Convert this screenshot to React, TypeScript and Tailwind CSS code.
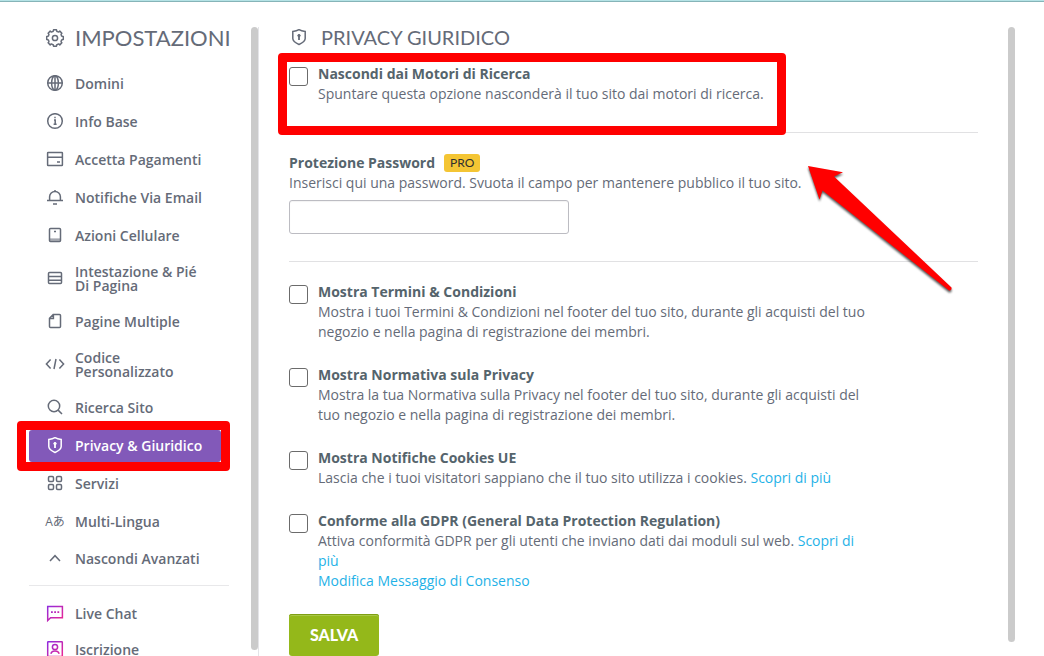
import React from 'react';
import clsx from 'clsx';

type IconName =
  | 'globe'
  | 'info'
  | 'card'
  | 'bell'
  | 'phone'
  | 'rows'
  | 'page'
  | 'code'
  | 'search'
  | 'shield'
  | 'grid'
  | 'up'
  | 'chat'
  | 'user';

// eight rounded teeth around the centre of a 20x20 box
const gearPath = (): string => {
  const at = (deg: number, r: number) => {
    const a = (deg * Math.PI) / 180;
    return `${(10 + r * Math.sin(a)).toFixed(2)} ${(10 - r * Math.cos(a)).toFixed(2)}`;
  };
  let d = `M${at(-10, 8.4)}`;
  for (let k = 0; k < 8; k++) {
    const t = k * 45;
    d += `L${at(t + 10, 8.4)}Q${at(t + 14, 6.4)} ${at(t + 22.5, 7)}Q${at(t + 31, 6.4)} ${at(t + 35, 8.4)}`;
  }
  return d + 'Z';
};

const shapes: Record<IconName, React.ReactNode> = {
  globe: (
    <>
      <circle cx="10" cy="10" r="7.3" />
      <ellipse cx="10" cy="10" rx="3.4" ry="7.3" />
      <path d="M10 2.7v14.6M2.7 10h14.6" />
    </>
  ),
  info: (
    <>
      <circle cx="10" cy="10" r="7.3" />
      <path d="M9 9h1.2v4.2M8.6 13.3h3M9.3 6.6h1.4" />
    </>
  ),
  card: (
    <>
      <rect x="2.6" y="3.5" width="14.8" height="13" rx="0.6" />
      <path d="M2.6 8.2h14.8M12 13h3" />
    </>
  ),
  bell: <path d="M2 13.5h16M4.6 13.5V9.8a5.4 5.4 0 0 1 10.8 0v3.7M10 4.4V3M8 17h4" />,
  phone: (
    <>
      <rect x="4.5" y="3.5" width="11" height="13" rx="1" />
      <path d="M9 6.5h2" />
      <path d="M5 14.6h10" strokeWidth="2.4" opacity="0.6" />
    </>
  ),
  rows: (
    <>
      <rect x="3.5" y="4.5" width="13" height="11" rx="1" />
      <path d="M3.5 8.5h13M3.5 12.2h13" />
    </>
  ),
  page: <path d="M8.2 3.5h6.3a1 1 0 0 1 1 1v11a1 1 0 0 1-1 1h-9a1 1 0 0 1-1-1V7.2zM8.4 3.7v3.7H4.7" />,
  code: <path d="M5.6 5.4 1.4 10l4.2 4.6M14.4 5.4l4.2 4.6-4.2 4.6M11 5l-2 10" />,
  search: (
    <>
      <circle cx="9" cy="9" r="5.7" />
      <path d="m13.1 13.1 3.9 3.9" />
    </>
  ),
  shield: (
    <>
      <path d="M10 2.7c2 1.3 4 1.6 6.2 1.7v7.2c0 3-3.4 4.7-6.2 5.9-2.8-1.2-6.200-2.900-6.200-5.900V4.400C6 4.300 8 4 10 2.700z" />
      <circle cx="10" cy="8.6" r="1.2" fill="currentColor" strokeWidth="1" />
      <path d="M10 9v4" strokeWidth="1.8" />
    </>
  ),
  grid: (
    <>
      <rect x="3.5" y="3.5" width="5" height="5" rx="1.2" />
      <rect x="11.5" y="3.5" width="5" height="5" rx="1.2" />
      <rect x="3.5" y="11.5" width="5" height="5" rx="1.2" />
      <rect x="11.5" y="11.5" width="5" height="5" rx="1.2" />
    </>
  ),
  up: <path d="m5 13 5-5.3 5 5.3" />,
  chat: (
    <>
      <path d="M2.7 17.5v-14h14.7v11.2H5.6z" />
      <path d="M6 9.2h1.8M9.2 9.2H11M12.4 9.2h1.8" strokeWidth="1.8" />
    </>
  ),
  user: (
    <>
      <rect x="2.7" y="2.8" width="14.6" height="14.6" rx="0.5" />
      <circle cx="10" cy="8" r="2.6" />
      <path d="M5.8 14.8c.6-2.2 2.2-2.9 4.2-2.9s3.6.7 4.2 2.9" />
    </>
  ),
};

const Icon: React.FC<{ name: IconName; gradient?: boolean }> = ({ name, gradient }) => (
  <svg
    viewBox="0 2 20 18"
    fill="none"
    stroke={gradient ? 'url(#pink)' : 'currentColor'}
    strokeWidth="1.5"
    className="h-[18px] w-5 shrink-0"
    aria-hidden="true"
  >
    {gradient && (
      <defs>
        <linearGradient id="pink" gradientUnits="userSpaceOnUse" x1="2" y1="2" x2="18" y2="18">
          <stop offset="0" stopColor="#8a2be2" />
          <stop offset="1" stopColor="#f0268f" />
        </linearGradient>
      </defs>
    )}
    {shapes[name]}
  </svg>
);

const mainItems: { label: string; icon: IconName; active?: boolean }[] = [
  { label: 'Domini', icon: 'globe' },
  { label: 'Info Base', icon: 'info' },
  { label: 'Accetta Pagamenti', icon: 'card' },
  { label: 'Notifiche Via Email', icon: 'bell' },
  { label: 'Azioni Cellulare', icon: 'phone' },
  { label: 'Intestazione & Pié Di Pagina', icon: 'rows' },
  { label: 'Pagine Multiple', icon: 'page' },
  { label: 'Codice Personalizzato', icon: 'code' },
  { label: 'Ricerca Sito', icon: 'search' },
  { label: 'Privacy & Giuridico', icon: 'shield', active: true },
  { label: 'Servizi', icon: 'grid' },
];

const itemClass = 'flex items-center gap-[10px] rounded-[3px] py-[7px] pr-4 pl-4';
const lowItemClass = 'flex h-[31px] w-full items-center gap-[10px] pr-4 pl-4 text-left';

const Sidebar: React.FC = () => (
  <aside className="flex shrink-0 border-r border-[#e4e4e8] pl-[29px]">
    <nav className="w-[200px]">
      <h1 className="flex h-[21px] items-center gap-[10px] pl-4 font-['Lato',sans-serif] text-[22px] leading-[21px]">
        <svg viewBox="0 0 20 20" fill="none" stroke="currentColor" strokeWidth="1.5" className="h-5 w-5 shrink-0" aria-hidden="true">
          <path d={gearPath()} strokeLinejoin="round" />
          <circle cx="10" cy="10" r="2.6" />
        </svg>
        IMPOSTAZIONI
      </h1>

      <ul className="mt-5 flex flex-col gap-[6px] text-sm leading-[14px] font-semibold">
        {mainItems.map((item) => (
          <li key={item.label} className="relative pr-2">
            <a
              href="#"
              aria-current={item.active ? 'page' : undefined}
              className={clsx(itemClass, item.active && 'bg-[#8259b9] text-white')}
            >
              <Icon name={item.icon} />
              {item.label}
            </a>
            {item.active && (
              <div className="pointer-events-none absolute -top-[9px] -right-px -bottom-[9px] -left-3 rounded-[4px] border-[9px] border-[#ff0000]" />
            )}
          </li>
        ))}
        <li>
          <a href="#" className={lowItemClass}>
            <span className="w-5 shrink-0 text-center font-['Open_Sans','Noto_Sans_CJK_JP',sans-serif] text-xs leading-[14px] font-normal whitespace-nowrap">
              Aあ
            </span>
            Multi-Lingua
          </a>
        </li>
        <li>
          <button type="button" className={lowItemClass}>
            <Icon name="up" />
            Nascondi Avanzati
          </button>
        </li>
      </ul>

      <hr className="mt-[11px] border-[#e8e8ea]" />

      <ul className="mt-3 flex flex-col gap-1 text-sm leading-[14px] font-semibold">
        <li>
          <a href="#" className={itemClass}>
            <Icon name="chat" gradient />
            Live Chat
          </a>
        </li>
        <li>
          <a href="#" className={itemClass}>
            <Icon name="user" gradient />
            Iscrizione
          </a>
        </li>
      </ul>
    </nav>
    <div className="mb-[6px] ml-[22px] w-[7px] rounded-full bg-[#cbcbcb]" />
  </aside>
);

const Option: React.FC<{ id: string; title: string; children: React.ReactNode }> = ({ id, title, children }) => (
  <div className="flex items-start gap-[10px]">
    <input
      type="checkbox"
      id={id}
      className="mt-[3px] h-[19px] w-[19px] shrink-0 appearance-none rounded-[3px] border border-[#6b6b6b] bg-white checked:bg-[#8259b9]"
    />
    <div className="max-w-[555px]">
      <label htmlFor={id} className="block font-bold text-[#55646c]">
        {title}
      </label>
      {children}
    </div>
  </div>
);

const App: React.FC = () => {
  return (
    <div className="flex h-screen flex-col overflow-hidden bg-white font-['Open_Sans',sans-serif] text-[#656b78]">
      <div className="h-[2px] shrink-0 border-b border-[#86b4b8] bg-[#b5e3e6]" />

      <div className="flex min-h-0 flex-1 pt-[25px]">
        <Sidebar />

        <main className="relative min-w-0 flex-1 pr-[30px] pl-[30px] text-sm leading-5">
          <h2 className="flex h-[21px] items-center gap-3 font-['Lato',sans-serif] text-xl leading-[21px]">
            <Icon name="shield" />
            PRIVACY GIURIDICO
          </h2>

          <div className="relative mt-4 w-fit pr-[21px] pb-[28px]">
            <Option id="nascondi" title="Nascondi dai Motori di Ricerca">
              <p>Spuntare questa opzione nasconderà il tuo sito dai motori di ricerca.</p>
            </Option>
            <div className="pointer-events-none absolute -top-[11px] -right-px -bottom-[3px] -left-[11px] rounded-[4px] border-[9px] border-[#ff0000]" />
          </div>
          <hr className="border-[#e1e1e3]" />

          <div className="mt-5">
            <div className="flex items-center gap-[9px]">
              <label htmlFor="password" className="font-bold text-[#55646c]">
                Protezione Password
              </label>
              <span className="flex h-[18px] items-center rounded-[3px] bg-[#f4c534] px-[6px] font-['Lato',sans-serif] text-xs leading-none text-[#2f2f2f]">
                PRO
              </span>
            </div>
            <p>Inserisci qui una password. Svuota il campo per mantenere pubblico il tuo sito.</p>
            <input
              type="password"
              id="password"
              className="mt-[7px] block h-[34px] w-[280px] rounded-[3px] border border-[#bcbcc2] px-2 shadow-[inset_0_1px_1px_#0000000d]"
            />
          </div>
          <hr className="mt-[27px] border-[#e1e1e3]" />

          <form className="mt-5" onSubmit={(e) => e.preventDefault()}>
            <div className="flex flex-col gap-[23px]">
              <Option id="termini" title="Mostra Termini & Condizioni">
                <p>
                  Mostra i tuoi Termini &amp; Condizioni nel footer del tuo sito, durante gli acquisti del tuo negozio e
                  nella pagina di registrazione dei membri.
                </p>
              </Option>
              <Option id="normativa" title="Mostra Normativa sula Privacy">
                <p>
                  Mostra la tua Normativa sulla Privacy nel footer del tuo sito, durante gli acquisti del tuo negozio e
                  nella pagina di registrazione dei membri.
                </p>
              </Option>
              <Option id="cookies" title="Mostra Notifiche Cookies UE">
                <p>
                  Lascia che i tuoi visitatori sappiano che il tuo sito utilizza i cookies.{' '}
                  <a href="#" className="text-[#1fb2e7]">Scopri di più</a>
                </p>
              </Option>
              <Option id="gdpr" title="Conforme alla GDPR (General Data Protection Regulation)">
                <p>
                  Attiva conformità GDPR per gli utenti che inviano dati dai moduli sul web.{' '}
                  <a href="#" className="text-[#1fb2e7]">Scopri di più</a>
                </p>
                <a href="#" className="text-[#1fb2e7]">Modifica Messaggio di Consenso</a>
              </Option>
            </div>
            <button
              type="submit"
              className="mt-[23px] h-[42px] rounded-[3px] bg-[#94b81a] px-[21px] font-['Lato',sans-serif] text-base leading-none font-black text-white shadow-[inset_0_1px_0_#7f9f14,inset_0_2px_0_#a9c748]"
            >
              SALVA
            </button>
          </form>

          {/* pointer to the highlighted option */}
          <svg
            viewBox="0 0 160 140"
            className="pointer-events-none absolute top-[133px] left-[541px] h-[140px] w-[160px] drop-shadow-[0_2px_1px_#000000aa]"
            aria-hidden="true"
          >
            <path d="M8 6 43 12.3 34 16.5 151.5 127.5Q152 131 149 130.5L22.500 30.500 19.500 39.500Z" fill="#ff0000" />
          </svg>
        </main>

        <div className="mr-[29px] mb-[14px] w-[7px] shrink-0 rounded-full bg-[#cbcbcb]" />
      </div>
    </div>
  );
};

export default App;
